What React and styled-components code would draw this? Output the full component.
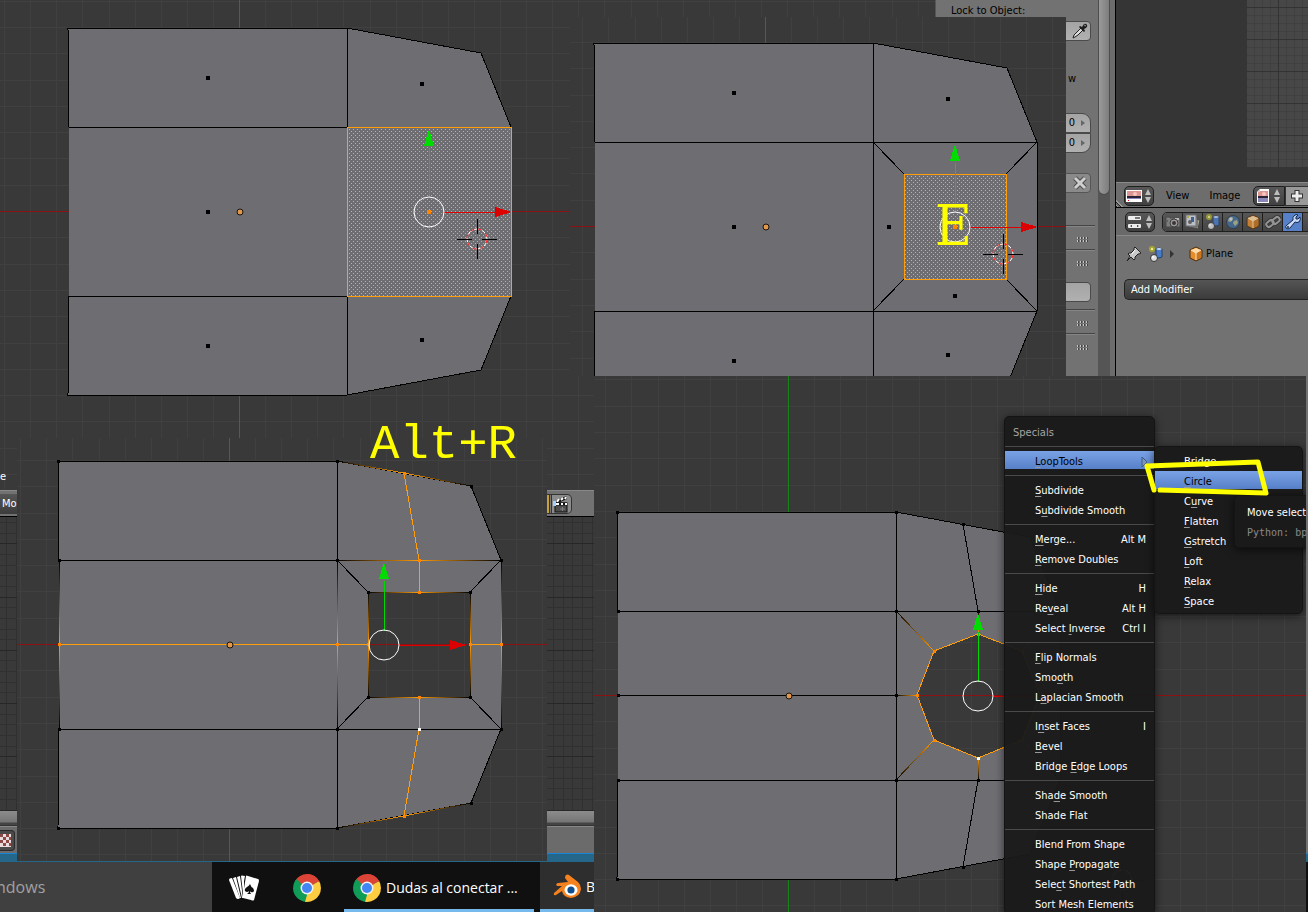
import React, { useId } from 'react';
import styled, { createGlobalStyle, css } from 'styled-components';

const GlobalStyle = createGlobalStyle`
    *{
        box-sizing: border-box;
    }
    body{
        margin: 0;
        background-color: #101010;
        font-family: "DejaVu Sans Condensed", "DejaVu Sans", sans-serif;
        font-size: 11px;
        line-height: 20px;
        color: #000;
    }
    button, input, select{
        font: inherit;
        color: inherit;
        border: 0;
        margin: 0;
        padding: 0;
        background: none;
    }
    svg{
        display: block;
        flex-shrink: 0;
    }
`;

const range = (from, to) => Array.from({ length: to - from + 1 }, (_, i) => from + i);

/* ---------- mesh viewport ---------- */

const OUTLINE = '-171,-183 108,-183 242,-158 272,-84 272,85 242,159 108,184 -171,184 -170,85 -170,-84';
const BODY = 'M-171,-183 H108 L242,-158 L272,-84 V85 L242,159 L108,184 H-171 L-170,85 V-84 Z';
const HOLES = {
    square: 'M139,-52 H241 V53 H139 Z',
    circle: 'M190,-61 L146,-44 L129,0 L146,45 L190,63 L234,45 L252,0 L234,-44 Z',
};
const FACE_DOTS = [[-30, -132], [184, -126], [-30, 2], [-30, 136], [184, 130]];

function Edge({ x1, y1, x2, y2, color = '#000' }) {
    return <line x1={x1} y1={y1} x2={x2} y2={y2} stroke={color} />;
}

// orange at the first point, black at the second
function FadeEdge({ x1, y1, x2, y2 }) {
    const id = useId();
    return (
        <>
            <linearGradient id={id} gradientUnits="userSpaceOnUse" x1={x1} y1={y1} x2={x2} y2={y2}>
                <stop offset="0" stopColor="#ff9d0a" />
                <stop offset="1" stopColor="#000" />
            </linearGradient>
            <line x1={x1} y1={y1} x2={x2} y2={y2} stroke={`url(#${id})`} />
        </>
    );
}

function Points({ list, size = 3, color = '#000' }) {
    const half = Math.floor(size / 2) + 1;
    return list.map(([x, y]) => (
        <rect key={`${x},${y}`} x={x - half} y={y - half} width={size} height={size} fill={color} />
    ));
}

function Stipple({ x, y, width, height }) {
    const id = useId();
    return (
        <>
            <pattern id={id} width="4" height="4" patternUnits="userSpaceOnUse">
                <rect width="1" height="1" fill="#b4b4b6" />
                <rect x="2" y="2" width="1" height="1" fill="#b4b4b6" />
            </pattern>
            <rect x={x} y={y} width={width} height={height} fill={`url(#${id})`} />
        </>
    );
}

function Gizmo({ x, dot }) {
    return (
        <g transform={`translate(${x} 1)`}>
            <line x1="0" y1="-14" x2="0" y2="-64" stroke="#00d800" />
            <path d="M0,-83 L5,-66 H-5 Z" fill="#00dc00" />
            <line x1="15" y1="0" x2="66" y2="0" stroke="#dc0000" />
            <path d="M83,0 L66,-5 V5 Z" fill="#dc0000" />
            <circle r="15" fill="none" stroke="#fff" shapeRendering="auto" />
            {dot && <rect x="-2" y="-2" width="4" height="4" fill="#ff8500" />}
        </g>
    );
}

function Cursor({ x, y }) {
    return (
        <g transform={`translate(${x} ${y})`}>
            <circle r="10" fill="none" stroke="#fff" shapeRendering="auto" />
            <circle r="10" fill="none" stroke="#f00" strokeDasharray="4 4" shapeRendering="auto" />
            <path d="M-20,0 H-5 M5,0 H20 M0,-20 V-5 M0,5 V20" stroke="#000" />
        </g>
    );
}

function Viewport({ x, y, hole, dots, children }) {
    return (
        <Scene shapeRendering="crispEdges">
            <g transform={`translate(${x} ${y})`}>
                {range(-36, 36).map(i => (
                    <g key={i} stroke="#404040">
                        <line x1={Math.round(i * 26.1)} y1="-900" x2={Math.round(i * 26.1)} y2="900" />
                        <line x1="-1200" y1={Math.round(i * 26.3)} x2="1200" y2={Math.round(i * 26.3)} />
                    </g>
                ))}
                <Edge x1={-1200} y1={0} x2={1200} y2={0} color="#8a1212" />
                <Edge x1={0} y1={-900} x2={0} y2={900} color="#178417" />
                <path d={BODY + (hole ? HOLES[hole] : '')} fill="#6e6d72" fillRule="evenodd" />
                <polygon points={OUTLINE} fill="none" stroke="#000" />
                <Edge x1={-170} y1={-84} x2={272} y2={-84} />
                <Edge x1={-170} y1={85} x2={272} y2={85} />
                <Edge x1={108} y1={-183} x2={108} y2={184} />
                {dots && <Points list={FACE_DOTS} size={4} />}
                {children}
                <circle cx="1" cy="1" r="3" fill="#e0974a" stroke="#17130d" shapeRendering="auto" />
            </g>
        </Scene>
    );
}

function FaceSelected() {
    return (
        <Viewport x={239} y={211} dots>
            <Stipple x={108} y={-84} width={164} height={169} />
            <path d="M108,-84 H272 V85 H108 Z" fill="none" stroke="#ff9d0a" />
            <Gizmo x={190} dot />
            <Cursor x={238} y={28} />
        </Viewport>
    );
}

function FaceInset() {
    return (
        <Viewport x={195} y={209} dots>
            <Points list={[[125, 2], [191, 71]]} size={4} />
            <Stipple x={139} y={-52} width={102} height={105} />
            <path d="M108,-84 L139,-52 M272,-84 L241,-52 M108,85 L139,53 M272,85 L241,53" stroke="#000" />
            <path d="M139,-52 H241 V53 H139 Z" fill="none" stroke="#ff9d0a" />
            <Gizmo x={190} dot />
            <Cursor x={238} y={28} />
        </Viewport>
    );
}

function SquareHole() {
    return (
        <Viewport x={212} y={206} hole="square">
            <path d="M108,-84 L139,-52 M272,-84 L241,-52 M108,85 L139,53 M272,85 L241,53" stroke="#000" />
            {[-170, 108, 139, 241, 272].map(x => (
                <React.Fragment key={x}>
                    <FadeEdge x1={x} y1={0} x2={x} y2={x === 139 || x === 241 ? -52 : -84} />
                    <FadeEdge x1={x} y1={0} x2={x} y2={x === 139 || x === 241 ? 53 : 85} />
                </React.Fragment>
            ))}
            <FadeEdge x1={175} y1={-171} x2={108} y2={-183} />
            <FadeEdge x1={175} y1={-171} x2={242} y2={-158} />
            <FadeEdge x1={175} y1={172} x2={108} y2={184} />
            <FadeEdge x1={175} y1={172} x2={242} y2={159} />
            {/* y2 equals y1 on the straight ones, the gradient still runs along x */}
            <FadeEdge x1={190} y1={-84} x2={108} y2={-84} />
            <FadeEdge x1={190} y1={-84} x2={272} y2={-84} />
            <FadeEdge x1={190} y1={-52} x2={139} y2={-52} />
            <FadeEdge x1={190} y1={-52} x2={241} y2={-52} />
            <FadeEdge x1={190} y1={53} x2={139} y2={53} />
            <FadeEdge x1={190} y1={53} x2={241} y2={53} />
            <path
                d="M175,-171 L190,-84 V-52 M190,53 V85 L175,172 M-170,0 H139 M241,0 H272"
                fill="none"
                stroke="#ff9d0a"
            />
            <Points
                list={[
                    [-170, -182], [-169, -83], [-169, 86], [-170, 185], [109, -182], [109, -83], [109, 86],
                    [109, 185], [243, -157], [243, 160], [273, -83], [273, 86], [140, -51], [242, -51],
                    [140, 54], [242, 54],
                ]}
            />
            <Points
                color="#ff8500"
                list={[
                    [-169, 1], [109, 1], [140, 1], [242, 1], [273, 1], [176, -170], [191, -83], [191, -51],
                    [191, 54], [176, 173],
                ]}
            />
            <Points color="#fff" list={[[191, 86]]} />
            <Gizmo x={155} />
        </Viewport>
    );
}

function RoundHole() {
    return (
        <Viewport x={194} y={319} hole="circle">
            <path d="M175,-171 L190,-84 M190,85 L175,172 M-170,0 H108 M252,0 H272" stroke="#000" fill="none" />
            <FadeEdge x1={146} y1={-44} x2={108} y2={-84} />
            <FadeEdge x1={146} y1={45} x2={108} y2={85} />
            <FadeEdge x1={129} y1={0} x2={108} y2={0} />
            <FadeEdge x1={190} y1={63} x2={190} y2={85} />
            <FadeEdge x1={190} y1={-61} x2={190} y2={-84} />
            <FadeEdge x1={234} y1={-44} x2={272} y2={-84} />
            <FadeEdge x1={234} y1={45} x2={272} y2={85} />
            <path d={HOLES.circle} fill="none" stroke="#ff9d0a" />
            <Points
                list={[
                    [-170, -182], [-169, -83], [-169, 1], [-169, 86], [-170, 185], [109, -182], [109, -83],
                    [109, 1], [109, 86], [109, 185], [176, -170], [176, 173], [191, -83], [191, 86],
                ]}
            />
            <Points color="#ff8500" list={[[147, -43], [130, 1], [147, 46], [191, -60], [235, -43], [235, 46]]} />
            <Points color="#fff" list={[[191, 64]]} />
            <Gizmo x={190} />
            <Cursor x={334} y={185} />
        </Viewport>
    );
}

/* ---------- icons ---------- */

function Arrows() {
    return (
        <svg width="8" height="16" viewBox="0 0 8 16">
            <path d="M4,1 L7,7 H1 Z M4,15 L7,9 H1 Z" fill="#bdbdbd" />
        </svg>
    );
}

function ImageIcon({ page }) {
    return (
        <svg width="16" height="16" viewBox="0 0 16 16">
            <path d={page ? 'M5,1 H14 V15 H2 V4 Z' : 'M0,2 H16 V14 H0 Z'} fill="#fff" />
            <rect x={page ? 3 : 1} y="3" width={page ? 10 : 14} height="6" fill="#dc9590" />
            <circle cx="9" cy="6" r="2" fill="#f4c6bd" />
            <rect x={page ? 3 : 1} y="8" width={page ? 10 : 14} height="2" fill="#2b2337" />
            <rect x={page ? 3 : 1} y="10" width={page ? 10 : 14} height={page ? 4 : 1} fill="#8986b8" />
            {page && <path d="M5,1 V4 H2 Z" fill="#ccc" />}
            {!page && <rect x="2" y="12" width="1" height="1" fill="#f00" />}
        </svg>
    );
}

function PropsIcon() {
    return (
        <svg width="16" height="16" viewBox="0 0 16 16">
            <rect x="1" y="2" width="13" height="4" rx="1" fill="#eee" />
            <rect x="8" y="3" width="5" height="2" fill="#777" />
            <rect x="1" y="10" width="13" height="4" rx="1" fill="#eee" />
            <path d="M3,12 L5,11 V13 Z M12,12 L10,11 V13 Z" fill="#222" />
        </svg>
    );
}

function CameraIcon() {
    return (
        <svg width="16" height="16" viewBox="0 0 16 16">
            <path d="M1,3 H5 V4 H15 V13 H1 Z" fill="#8b8b8b" stroke="#4a4a4a" />
            <rect x="10" y="4" width="4" height="2" fill="#d0d0d0" />
            <circle cx="9" cy="9" r="4" fill="#b0b0b0" stroke="#3a3a3a" />
            <circle cx="9" cy="9" r="2" fill="#3c3030" />
            <rect x="2" y="6" width="1" height="2" fill="#c33" />
        </svg>
    );
}

function LayersIcon() {
    return (
        <svg width="16" height="16" viewBox="0 0 16 16">
            <path d="M6,4 L15,6 L13,15 L4,13 Z" fill="#b9b9a4" stroke="#444" />
            <path d="M4,3 H12 V13 H4 Z" fill="#cfcfcf" stroke="#555" />
            <rect x="1" y="1" width="10" height="11" fill="#d7dde6" stroke="#777" />
            <rect x="6" y="3" width="3" height="5" fill="#3d64a0" />
            <circle cx="5" cy="8" r="2" fill="#666" />
            <rect x="2" y="2" width="2" height="2" fill="#c9c938" />
        </svg>
    );
}

function SceneIcon() {
    return (
        <svg width="16" height="16" viewBox="0 0 16 16">
            <circle cx="4" cy="3" r="3" fill="#a8a830" />
            <circle cx="4" cy="3" r="1" fill="#ffffc0" />
            <path d="M8,3 Q11,1 14,3 V11 Q11,13 8,11 Z" fill="#4a7dc8" stroke="#26426e" />
            <path d="M8,3 Q11,1 14,3 Q11,5 8,3 Z" fill="#c5dcf8" />
            <circle cx="6" cy="12" r="3.5" fill="#ddd" stroke="#333" />
            <circle cx="5" cy="11" r="1" fill="#fff" />
        </svg>
    );
}

function WorldIcon() {
    return (
        <svg width="16" height="16" viewBox="0 0 16 16">
            <circle cx="8" cy="8" r="6.5" fill="#44719f" stroke="#2b3b4c" />
            <path d="M4,4 Q7,2 8,4 L7,7 L5,8 L3,7 Z M9,7 L12,6 L13,9 L10,12 L8,9 Z" fill="#b3b78b" />
            <circle cx="6" cy="5" r="1.5" fill="#dde" />
        </svg>
    );
}

function CubeIcon() {
    return (
        <svg width="16" height="16" viewBox="0 0 16 16">
            <path d="M8,1 L14,4 V12 L8,15 L2,12 V4 Z" fill="#e38d2c" stroke="#4b2d0c" />
            <path d="M8,2 L13,4 L8,7 L3,4 Z" fill="#ffd7a0" />
            <path d="M8,7 L13,4 V12 L8,14 Z" fill="#c9761d" />
            <path d="M3,4 L8,7 V14 M8,7 L13,4" fill="none" stroke="#ffe4bd" />
        </svg>
    );
}

function LinkIcon() {
    return (
        <svg width="16" height="16" viewBox="0 0 16 16" fill="none" strokeLinecap="round">
            <g stroke="#2c2c2c" strokeWidth="4">
                <rect x="1" y="7" width="8" height="5" rx="2.5" transform="rotate(-38 5 9.5)" />
                <rect x="7" y="4" width="8" height="5" rx="2.5" transform="rotate(-38 11 6.5)" />
            </g>
            <g stroke="#a5a5a5" strokeWidth="2">
                <rect x="1" y="7" width="8" height="5" rx="2.5" transform="rotate(-38 5 9.5)" />
                <rect x="7" y="4" width="8" height="5" rx="2.5" transform="rotate(-38 11 6.5)" />
            </g>
        </svg>
    );
}

function WrenchIcon() {
    return (
        <svg width="16" height="16" viewBox="0 0 16 16">
            <path
                d="M10,1 Q13,0 13,1 L11,3 L11,5 L13,5 L15,3 Q16,6 14,8 Q12,9 10,8 L5,14 Q3,16 1,14 Q0,12 2,11 L8,6 Q7,3 10,1 Z"
                fill="#c7d9f6"
                stroke="#16284a"
            />
            <circle cx="3" cy="13" r="1" fill="#16284a" />
        </svg>
    );
}

function PinIcon() {
    return (
        <svg width="16" height="16" viewBox="0 0 16 16">
            <path
                d="M9,1 L15,7 L13,8 L12,8 L9,11 L9,13 L8,14 L5,11 L1,15 L4,10 L2,8 L3,7 L5,7 L8,4 L8,2 Z"
                fill="#c9c9c9"
                stroke="#222"
            />
            <path d="M9,4 L6,8" stroke="#fff" />
        </svg>
    );
}

function DropperIcon() {
    return (
        <svg width="16" height="16" viewBox="0 0 16 16">
            <path d="M9,5 L11,7 L6,12 L3,14 L1,15 L2,12 Z" fill="#ddd" stroke="#222" />
            <path d="M8,3 L10,4 L12,1 Q14,0 15,2 Q16,3 14,5 L12,6 L13,8 L12,9 L7,4 Z" fill="#1d1d1d" />
            <path d="M12,2 L14,3" stroke="#999" />
        </svg>
    );
}

function CloseIcon() {
    return (
        <svg width="16" height="16" viewBox="0 0 16 16">
            <path d="M3,3 L13,13 M13,3 L3,13" stroke="#4c4c4c" strokeWidth="5" />
            <path d="M3,3 L13,13 M13,3 L3,13" stroke="#cfcfcf" strokeWidth="3" />
        </svg>
    );
}

function PlusIcon() {
    return (
        <svg width="16" height="16" viewBox="0 0 16 16">
            <path d="M8,2 V14 M2,8 H14" stroke="#333" strokeWidth="5" />
            <path d="M8,3 V13 M3,8 H13" stroke="#eee" strokeWidth="3" />
        </svg>
    );
}

function ClapperIcon() {
    return (
        <svg width="18" height="18" viewBox="0 0 18 18">
            <path d="M2,7 L14,1 L15,4 L4,9 Z" fill="#111" />
            <path d="M5,7 L7,4 M9,5 L11,3 M13,4 L14,2" stroke="#fff" strokeWidth="2" />
            <rect x="3" y="8" width="12" height="9" fill="#4d4d4d" stroke="#111" />
            <path d="M3,9 H15" stroke="#111" strokeWidth="3" />
            <path d="M4,9 H7 M9,9 H11 M13,9 H15" stroke="#fff" strokeWidth="2" />
            <rect x="1" y="6" width="3" height="5" fill="#9fd0ff" />
            <path d="M8,14 H13 M10.5,12 V16" stroke="#808080" />
        </svg>
    );
}

function CheckerIcon() {
    return (
        <svg width="11" height="13" viewBox="0 0 11 13">
            <rect width="11" height="13" fill="#e9dcdc" />
            {range(0, 3).map(r => range(0, 2).map(c => (
                <rect key={`${r}${c}`} x={c * 6 - (r % 2) * 3} y={r * 3} width="3" height="3" fill="#8b4a48" />
            )))}
        </svg>
    );
}

function CardsIcon() {
    return (
        <svg width="30" height="26" viewBox="0 0 30 26" fill="#fff">
            <path d="M0,5 Q0,3 3,3 L11,23 Q9,25 7,23 Z" />
            <path d="M4,3 L7,2 L12,23 L11,23 Z" />
            <path d="M8,2 L11,1 L14,23 L13,23 Z" />
            <path d="M12,1 Q12,0 16,1 L15,6 L15,20 L14,18 Z" />
            <path d="M17,1 Q17,0 19,1 L29,4 Q30,4 30,6 L25,25 Q24,26 22,25 L14,23 Q13,22 14,20 Z" />
            <path
                d="M21,9 Q22,12 24,13 Q26,16 24,17 Q22,18 21,16 Q21,18 22,19 H18 Q20,18 20,16 Q18,18 16,16 Q15,14 18,12 Q20,11 21,9 Z"
                fill="#111"
            />
        </svg>
    );
}

function ChromeIcon() {
    return (
        <svg width="28" height="28" viewBox="0 0 28 28">
            <path d="M14,14 L1.9,7 A14,14 0 0 1 26.1,7 Z" fill="#db4437" />
            <path d="M14,14 L26.1,7 A14,14 0 0 1 14,28 Z" fill="#ffcd40" />
            <path d="M14,14 L14,28 A14,14 0 0 1 1.9,7 Z" fill="#0f9d58" />
            <path d="M14,7.5 H26.4 L26.1,7 A14,14 0 0 0 14,0 Z" fill="#db4437" />
            <path d="M8.4,17.2 L1.9,7 L4,5 L12,14 Z" fill="#0f9d58" />
            <path d="M19.6,17.2 L14,28 L12,27.8 L15,18 Z" fill="#ffcd40" />
            <circle cx="14" cy="14" r="6.5" fill="#f1f1f1" />
            <circle cx="14" cy="14" r="5" fill="#4285f4" />
        </svg>
    );
}

function BlenderIcon() {
    return (
        <svg width="28" height="26" viewBox="0 0 28 26">
            <path
                d="M13,1 Q15,0 16,1 L25,8 Q28,11 28,15 Q27,23 18,24 Q10,23 9,17 L3,21 Q0,22 1,19 L9,12 H4 Q2,10 5,9 L15,8 L12,4 Q12,2 13,1 Z"
                fill="#f5821f"
            />
            <ellipse cx="18" cy="16" rx="6.5" ry="5.8" fill="#fff" />
            <circle cx="18" cy="16" r="3.6" fill="#0f4d8c" />
        </svg>
    );
}

/* ---------- specials menu ---------- */

// "_" stands before the access key letter
const SPECIALS = [
    [['_LoopTools', '', true]],
    [['_Subdivide'], ['S_ubdivide Smooth']],
    [['_Merge...', 'Alt M'], ['_Remove Doubles']],
    [['_Hide', 'H'], ['Re_veal', 'Alt H'], ['Select _Inverse', 'Ctrl I']],
    [['_Flip Normals'], ['Smo_oth'], ['L_aplacian Smooth']],
    [['I_nset Faces', 'I'], ['_Bevel'], ['Bridge _Edge Loops']],
    [['Sha_de Smooth'], ['Shade Flat']],
    [['Blend From Shape'], ['Shape _Propagate'], ['Sele_ct Shortest Path'], ['Sort Mesh Elements']],
];
const LOOP_TOOLS = ['Bridge', '_Circle', 'C_urve', '_Flatten', '_Gstretch', '_Loft', '_Relax', '_Space'];

function Label({ text }) {
    const at = text.indexOf('_');
    if (at < 0) return <span>{text}</span>;
    return <span>{text.slice(0, at)}<u>{text[at + 1]}</u>{text.slice(at + 2)}</span>;
}

function SpecialsMenu() {
    return (
        <Menu>
            <MenuTitle>Specials</MenuTitle>
            {SPECIALS.map((group, i) => (
                <MenuGroup key={i}>
                    {group.map(([text, keys, active]) => (
                        <MenuItem key={text} $active={active}>
                            <Label text={text} />
                            {keys && <span>{keys}</span>}
                            {active && (
                                <svg width="8" height="12" viewBox="0 0 8 12">
                                    <path d="M1,1 L6,6 L1,11 Z" fill="#7d95bd" stroke="#3f5a8a" />
                                </svg>
                            )}
                        </MenuItem>
                    ))}
                </MenuGroup>
            ))}
        </Menu>
    );
}

/* ---------- page ---------- */

export default function App() {
    return (
        <Page>
            <GlobalStyle />
            <Blender>
                <Columns>
                    <MainColumn>
                        <TopArea>
                            <Editor>
                                <FaceSelected />
                                <Hint>e</Hint>
                            </Editor>
                            <SidePanel>
                                <SideLabel>Lock to Object:</SideLabel>
                                <Field aria-label="Pick object"><DropperIcon /></Field>
                                <SideText>w</SideText>
                                <Numbers>
                                    <Field $round="top">0<i /></Field>
                                    <Field $round="bottom">0<i /></Field>
                                </Numbers>
                                <Field $dim aria-label="Clear"><CloseIcon /></Field>
                                <Sections>
                                    <Section><Grip /></Section>
                                    <Section $tall><Grip /><Field aria-label="Item" /></Section>
                                    <Section><Grip /></Section>
                                    <Section><Grip /></Section>
                                </Sections>
                            </SidePanel>
                            <ScrollTrack><ScrollThumb /></ScrollTrack>
                        </TopArea>
                        <StripHeader>
                            <ModeButton>Mo</ModeButton>
                            <RenderButton aria-label="Render animation"><ClapperIcon /></RenderButton>
                        </StripHeader>
                        <Timeline shapeRendering="crispEdges">
                            {range(0, 62).map(i => (
                                <line key={i} x1={Math.round(i * 9.6) + 6} y1="0" x2={Math.round(i * 9.6) + 6} y2="100%" stroke="#303030" />
                            ))}
                            {range(0, 90).map(i => (
                                <line
                                    key={i}
                                    x1="0"
                                    y1={Math.round(i * 10.65) + 5}
                                    x2="100%"
                                    y2={Math.round(i * 10.65) + 5}
                                    stroke={i % 5 === 2 ? '#272727' : '#303030'}
                                />
                            ))}
                        </Timeline>
                        <TimelineScroll />
                        <BottomHeader><IconBox><CheckerIcon /></IconBox></BottomHeader>
                    </MainColumn>
                    <RightColumn>
                        <ImageEditor><ImageGrid /></ImageEditor>
                        <EditorHeader>
                            <DarkButton aria-label="Editor type"><ImageIcon /><Arrows /></DarkButton>
                            <MenuLinks>
                                <button>View</button>
                                <button>Image</button>
                            </MenuLinks>
                            <DarkButton $flat aria-label="Browse image"><ImageIcon page /><Arrows /></DarkButton>
                            <AddButton aria-label="New image"><PlusIcon /></AddButton>
                        </EditorHeader>
                        <PropsHeader>
                            <DarkButton aria-label="Editor type"><PropsIcon /><Arrows /></DarkButton>
                            <Tabs>
                                <Tab aria-label="Render"><CameraIcon /></Tab>
                                <Tab aria-label="Layers"><LayersIcon /></Tab>
                                <Tab aria-label="Scene"><SceneIcon /></Tab>
                                <Tab aria-label="World"><WorldIcon /></Tab>
                                <Tab aria-label="Object"><CubeIcon /></Tab>
                                <Tab aria-label="Constraints"><LinkIcon /></Tab>
                                <Tab aria-label="Modifiers" $active><WrenchIcon /></Tab>
                                <Tab aria-label="Data" />
                            </Tabs>
                        </PropsHeader>
                        <Path>
                            <PinIcon />
                            <SceneIcon />
                            <svg width="5" height="8" viewBox="0 0 5 8"><path d="M0,0 L4,4 L0,8 Z" fill="#333" /></svg>
                            <Crumb><CubeIcon />Plane</Crumb>
                        </Path>
                        <Modifier aria-label="Add Modifier" defaultValue="add">
                            <option value="add">Add Modifier</option>
                        </Modifier>
                    </RightColumn>
                </Columns>
                <DesktopStrip />
            </Blender>

            <Taskbar>
                <Search>ndows</Search>
                <Task aria-label="Solitaire"><CardsIcon /></Task>
                <Task aria-label="Chrome"><ChromeIcon /></Task>
                <Task $wide><ChromeIcon />Dudas al conectar ...</Task>
                <Task $dark><BlenderIcon />B</Task>
            </Taskbar>

            <InsetShot>
                <FaceInset />
                <KeyE>E</KeyE>
            </InsetShot>
            <HoleShot><SquareHole /></HoleShot>
            <MenuShot>
                <RoundHole />
                <SpecialsMenu />
                <SubMenu>
                    {LOOP_TOOLS.map(text => (
                        <MenuItem key={text} $active={text === '_Circle'}><Label text={text} /></MenuItem>
                    ))}
                </SubMenu>
                <Tooltip>
                    <div>Move select</div>
                    <code>Python: bp</code>
                </Tooltip>
                <Marker width="130" height="44" viewBox="0 0 130 44">
                    <path
                        d="M13,34 L6,10 L117,6 L125,37 L19,34"
                        fill="none"
                        stroke="#ff0"
                        strokeWidth="5"
                        strokeLinecap="round"
                        strokeLinejoin="round"
                    />
                </Marker>
            </MenuShot>
            <KeyAltR>Alt+R</KeyAltR>
        </Page>
    );
}

const Page = styled.div`
    position: relative;
    display: grid;
    grid-template-columns: 17px 530px 23px 24px 472px minmax(0, 1fr) 2px;
    grid-template-rows: 17px 359px 62px minmax(0, 1fr) 51px;
    min-width: 1200px;
    height: 100vh;
    min-height: 700px;
    overflow: hidden;
`;

const Scene = styled.svg`
    width: 100%;
    height: 100%;
    background-color: #393939;
`;

const Blender = styled.div`
    grid-area: 1 / 1 / 5 / -1;
    display: flex;
    flex-direction: column;
    min-width: 0;
`;

const Columns = styled.div`
    flex: 1;
    display: flex;
    min-height: 0;
`;

const MainColumn = styled.div`
    flex: 1;
    min-width: 0;
    display: flex;
    flex-direction: column;
    border-right: 1px solid #000;
`;

const TopArea = styled.div`
    display: flex;
    height: 490px;
    background-color: #727272;
`;

const Editor = styled.div`
    position: relative;
    flex: 1;
    min-width: 0;
`;

const Hint = styled.span`
    position: absolute;
    left: 0;
    bottom: 3px;
    color: #fff;
`;

const SidePanel = styled.div`
    width: 163px;
    padding-right: 7px;
    display: flex;
    flex-direction: column;
    align-items: flex-end;
    border-left: 1px solid #555;
`;

const SideLabel = styled.div`
    align-self: flex-start;
    padding-left: 15px;
    height: 21px;
    line-height: 21px;
`;

const Field = styled.button`
    display: flex;
    justify-content: flex-end;
    align-items: center;
    gap: 6px;
    width: 138px;
    height: 20px;
    padding-right: 2px;
    border: 1px solid #4a4a4a;
    border-radius: 4px;
    background: linear-gradient(#a4a4a4, #b0b0b0);
    ${p => p.$dim && css`
        background: #8a8a8a;
        border-color: #555;
    `}
    ${p => p.$round && css`
        padding-right: 5px;
        border-radius: ${p.$round === 'top' ? '9px 9px 0 0' : '0 0 9px 9px'};
    `}
    i{
        border: 3px solid transparent;
        border-left: 4px solid #666;
        border-right: 0;
    }
`;

const SideText = styled.div`
    padding: 28px 15px 24px 0;
`;

const Numbers = styled.div`
    margin-bottom: 20px;
`;

const Sections = styled.div`
    width: 100%;
    padding-top: 32px;
    margin-right: -4px;
`;

const Section = styled.div`
    display: flex;
    flex-direction: column;
    align-items: flex-end;
    gap: 40px;
    height: ${p => (p.$tall ? 84 : 24)}px;
    padding: 11px 4px 0 0;
    border-top: 1px solid #454545;
    box-shadow: inset 0 1px #858585;
    ${p => p.$tall && css`
        height: 60px;
        gap: 16px;
    `}
`;

const Grip = styled.div`
    width: 12px;
    height: 5px;
    flex-shrink: 0;
    margin-right: 2px;
    background:
        linear-gradient(#727272, #727272) no-repeat 0 2px / 100% 1px,
        repeating-linear-gradient(90deg, #c5c5c5 0 1px, #444 1px 2px, #727272 2px 3px);
`;

const ScrollTrack = styled.div`
    width: 17px;
    padding-right: 5px;
    background: linear-gradient(90deg, #555 0 12px, #6c6c6c 12px);
`;

const ScrollThumb = styled.div`
    height: 195px;
    border-radius: 0 0 6px 6px;
    border: 1px solid #4d4d4d;
    border-top: 0;
    background: linear-gradient(90deg, #9a9a9a, #7d7d7d);
`;

const StripHeader = styled.div`
    display: grid;
    grid-template-columns: 17px 530px 1fr;
    height: 27px;
    align-items: center;
    background-color: #727272;
    border-top: 1px solid #888;
    border-bottom: 1px solid #000;
`;

const ModeButton = styled.button`
    height: 20px;
    padding-left: 2px;
    text-align: left;
    overflow: hidden;
    background: linear-gradient(#555, #3c3c3c);
    color: #fff;
`;

const RenderButton = styled.button`
    grid-column: 3;
    width: 25px;
    height: 20px;
    padding-left: 5px;
    background: linear-gradient(90deg, #c9a13a 0 2px, #333 2px 3px, #777 3px 4px, #333 4px 5px, #8b8b8b 5px);
    border: 1px solid #333;
    border-left: 0;
    border-radius: 0 5px 5px 0;
`;

const Timeline = styled.svg`
    flex: 1;
    min-height: 0;
    width: 100%;
    background-color: #393939;
`;

const TimelineScroll = styled.div`
    height: 15px;
    background: linear-gradient(#8c8c8c, #757575 11px, #444 12px);
    border-bottom: 1px solid #333;
`;

const BottomHeader = styled.div`
    display: flex;
    align-items: center;
    height: 27px;
    background-color: #6b6b6b;
    border-top: 1px solid #888;
`;

const IconBox = styled.div`
    padding: 3px 3px 3px 0;
    border: 1px solid #2a2a2a;
    border-left: 0;
    border-radius: 0 4px 4px 0;
    background-color: #4a4a4a;
`;

const DesktopStrip = styled.div`
    height: 8px;
    background-color: #24678a;
    border-top: 1px solid #1883d7;
`;

const RightColumn = styled.div`
    width: 192px;
    display: flex;
    flex-direction: column;
    background-color: #727272;
    overflow: hidden;
`;

const ImageEditor = styled.div`
    display: flex;
    justify-content: flex-end;
    height: 182px;
    padding-bottom: 15px;
    background-color: #353535;
`;

const ImageGrid = styled.div`
    width: 61px;
    background-color: #474747;
    background-image:
        linear-gradient(90deg, #333 1px, transparent 1px),
        linear-gradient(#333 1px, transparent 1px),
        linear-gradient(90deg, #404040 1px, transparent 1px),
        linear-gradient(#404040 1px, transparent 1px);
    background-size: 32px 32px, 32px 32px, 8px 8px, 8px 8px;
    background-position: 31px 7px;
`;

const EditorHeader = styled.div`
    display: flex;
    align-items: center;
    height: 26px;
    padding: 2px 0 0 8px;
    border-top: 1px solid #8a8a8a;
    border-bottom: 1px solid #000;
    background: #6d6d6d linear-gradient(45deg, #222 0 1px, #999 1px 2px, #6d6d6d 2px 3px, #222 3px 4px, #999 4px 5px, #6d6d6d 5px) no-repeat 0 100% / 9px 9px;
`;

const DarkButton = styled.button`
    display: flex;
    align-items: center;
    gap: 2px;
    flex-shrink: 0;
    width: ${p => (p.$flat ? 32 : 30)}px;
    height: 20px;
    padding: 0 1px;
    border: 1px solid #1f1f1f;
    border-radius: ${p => (p.$flat ? '5px 0 0 5px' : '5px')};
    background: linear-gradient(#575757, #404040);
`;

const MenuLinks = styled.div`
    display: flex;
    gap: 20px;
    padding: 0 13px 0 12px;
`;

const AddButton = styled.button`
    width: 24px;
    height: 20px;
    padding-left: 3px;
    border: 1px solid #333;
    border-right: 0;
    background-color: #999;
`;

const PropsHeader = styled.div`
    display: flex;
    align-items: center;
    gap: 7px;
    height: 28px;
    padding-left: 9px;
    border-bottom: 1px solid #888;
    background-color: #696969;
`;

const Tabs = styled.div`
    display: flex;
    flex-shrink: 0;
    border: 1px solid #1f1f1f;
    border-radius: 5px 0 0 5px;
    overflow: hidden;
`;

const Tab = styled.button`
    display: flex;
    align-items: center;
    justify-content: center;
    width: 20px;
    height: 18px;
    border-right: 1px solid #1f1f1f;
    background: ${p => (p.$active ? '#5680c8' : 'linear-gradient(#575757, #444)')};
    svg{
        opacity: ${p => (p.$active ? 1 : 0.8)};
    }
`;

const Path = styled.div`
    display: flex;
    align-items: center;
    gap: 6px;
    padding: 8px 10px;
    margin-bottom: 7px;
`;

const Crumb = styled.span`
    display: flex;
    align-items: center;
    gap: 2px;
    padding-left: 7px;
`;

const Modifier = styled.select`
    appearance: none;
    height: 21px;
    margin-left: 8px;
    padding-left: 6px;
    border: 1px solid #222;
    border-right: 0;
    border-radius: 5px 0 0 5px;
    background: linear-gradient(#555, #3b3b3b);
    color: #fff;
`;

const Taskbar = styled.div`
    grid-area: 5 / 1 / 6 / -1;
    display: flex;
    border-top: 1px solid #24678a;
    background-color: #101010;
    font-family: "Open Sans", "Noto Sans", sans-serif;
    color: #fff;
`;

const Search = styled.div`
    width: 212px;
    background-color: #404040;
    color: #a0a0a0;
    font-size: 16px;
    line-height: 50px;
    text-indent: -4px;
`;

const Task = styled.button`
    display: flex;
    align-items: center;
    justify-content: center;
    flex-shrink: 0;
    gap: 5px;
    width: 62px;
    margin-left: 1px;
    padding-top: 2px;
    font-size: 14px;
    white-space: nowrap;
    ${p => p.$wide && css`
        width: 190px;
        margin: 0 6px;
        padding: 4px 0 0 9px;
        justify-content: flex-start;
        border-bottom: 3px solid #76b9ed;
    `}
    ${p => p.$dark && css`
        width: 190px;
        margin: 0;
        padding: 3px 0 0 13px;
        justify-content: flex-start;
        background-color: #2e2e2e;
        border-bottom: 3px solid #76b9ed;
    `}
`;

const Shot = styled.section`
    position: relative;
    overflow: hidden;
    min-width: 0;
    min-height: 0;
    background-color: #393939;
`;

const InsetShot = styled(Shot)`
    grid-area: 2 / 4 / 3 / 6;
`;

const HoleShot = styled(Shot)`
    grid-area: 4 / 2 / 5 / 3;
`;

const MenuShot = styled(Shot)`
    grid-area: 3 / 5 / 6 / 7;
`;

const Annotation = styled.span`
    position: absolute;
    color: #ff0;
    line-height: 56px;
`;

const KeyE = styled(Annotation)`
    left: 365px;
    top: 181px;
    font-family: "DejaVu Serif Condensed", "DejaVu Serif", serif;
    font-size: 56px;
`;

const KeyAltR = styled(Annotation)`
    left: 370px;
    top: 417px;
    font-family: "Liberation Mono", monospace;
    font-size: 49px;
`;

const popup = css`
    position: absolute;
    background-color: rgba(26, 26, 26, 0.96);
    border: 1px solid #141414;
    border-radius: 5px;
    box-shadow: 0 2px 8px rgba(0, 0, 0, 0.6);
    color: #fff;
`;

const Menu = styled.div`
    ${popup}
    left: 410px;
    top: 40px;
    width: 151px;
    padding-top: 5px;
`;

const MenuTitle = styled.div`
    height: 20px;
    padding-left: 8px;
    line-height: 22px;
    color: #a5a5a5;
`;

const MenuGroup = styled.div`
    position: relative;
    padding-top: 9px;
    &::before{
        content: "";
        position: absolute;
        top: 4px;
        left: 0;
        right: 0;
        height: 1px;
        background-color: #4a4a4a;
    }
`;

const MenuItem = styled.button`
    display: flex;
    align-items: center;
    justify-content: space-between;
    width: 100%;
    height: 20px;
    padding: 2px 8px 0 30px;
    line-height: 18px;
    white-space: nowrap;
    ${p => p.$active && css`
        padding-right: 5px;
        color: #000;
        background: linear-gradient(#7aa2e6, #5680c8) no-repeat 0 0 / 100% 18px;
    `}
    u{
        text-decoration-color: #999;
        text-underline-offset: 2px;
    }
`;

const SubMenu = styled.div`
    ${popup}
    left: 560px;
    top: 70px;
    width: 149px;
    padding: 4px 0 2px;
    ${MenuItem}{
        padding-left: 29px;
    }
`;

const Tooltip = styled.div`
    ${popup}
    left: 640px;
    top: 119px;
    padding: 7px 0 4px 12px;
    width: 140px;
    white-space: nowrap;
    code{
        display: block;
        font-family: "DejaVu Sans Mono", monospace;
        font-size: 10px;
        color: #8a8a8a;
    }
`;

const Marker = styled.svg`
    position: absolute;
    left: 547px;
    top: 80px;
`;
